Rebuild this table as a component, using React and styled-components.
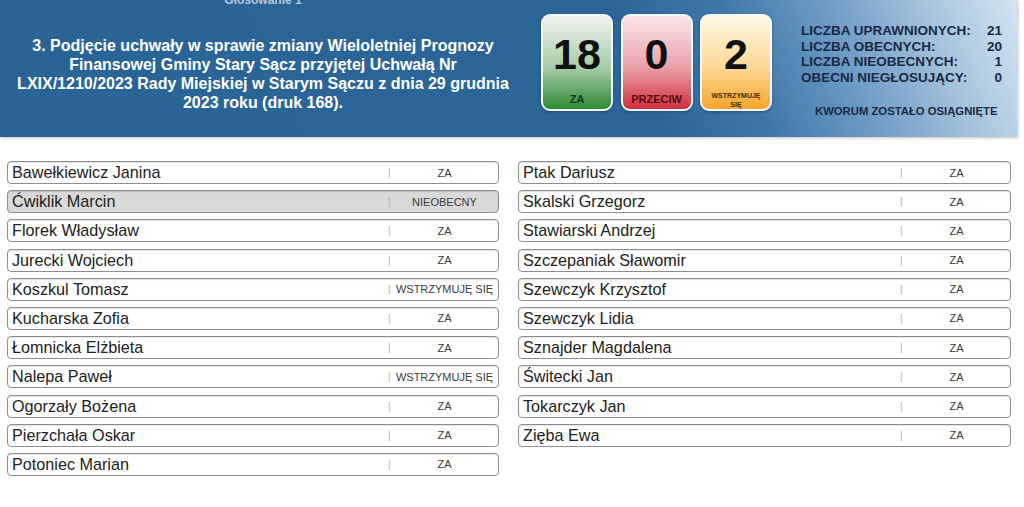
import React from "react";
import styled, { createGlobalStyle } from "styled-components";

const Global = createGlobalStyle`
  html, body { margin: 0; padding: 0; background: #ffffff; }
  body { font-family: "Liberation Sans", Arial, sans-serif; overflow: hidden; }
`;

const Page = styled.div`
  width: 1024px;
  height: 507px;
  background: #fff;
`;

const Header = styled.header`
  width: 1017px;
  height: 137px;
  display: flex;
  align-items: flex-start;
  background: linear-gradient(248deg, #d4e4f1 0%, #a9c6df 8%, #6f9cc5 18%, #3f77a9 28%, #2c6698 38%, #2a6496 100%);
  box-shadow: 1px 1px 3px rgba(0, 0, 0, 0.25);
`;

const TitleBlock = styled.div`
  width: 526px;
  flex: none;
  display: flex;
  flex-direction: column;
  align-items: center;
  text-align: center;
`;

const Caption = styled.div`
  margin-top: -7px;
  height: 14px;
  font-size: 12px;
  font-weight: bold;
  color: #b4c8dc;
  line-height: 14px;
`;

const Title = styled.div`
  margin-top: 29px;
  font-size: 16px;
  font-weight: bold;
  line-height: 19px;
  color: #ffffff;
  white-space: nowrap;
`;

const Cards = styled.div`
  display: flex;
  gap: 7.5px;
  margin-top: 14px;
  margin-left: 15px;
  flex: none;
`;

const palettes = {
  za: { top: "#eef4ee", mid: "#a8cca8", bottom: "#2f8a35", label: "#17331a" },
  przeciw: { top: "#fbe6e8", mid: "#eaa0a8", bottom: "#d12f3c", label: "#5a0a0a" },
  wstrzymuje: { top: "#fff7e6", mid: "#fdd894", bottom: "#f6a62c", label: "#4a2800" },
};

const Card = styled.div`
  width: 72px;
  height: 97px;
  box-sizing: border-box;
  border: 2px solid #f4f8fb;
  border-radius: 9px;
  background: linear-gradient(
    to bottom,
    ${(p) => palettes[p.$kind].top} 0%,
    ${(p) => palettes[p.$kind].mid} 55%,
    ${(p) => palettes[p.$kind].bottom} 100%
  );
  box-shadow: 0 1px 3px rgba(0, 0, 0, 0.3);
  display: flex;
  flex-direction: column;
  align-items: center;
`;

const Count = styled.div`
  margin-top: 16px;
  font-size: 43px;
  font-weight: bold;
  line-height: 44px;
  color: #111;
`;

const CardLabel = styled.div`
  margin-top: ${(p) => (p.$small ? "15px" : "17px")};
  font-size: ${(p) => (p.$small ? "7px" : "11px")};
  line-height: ${(p) => (p.$small ? "9px" : "12px")};
  font-weight: bold;
  text-align: center;
  color: ${(p) => palettes[p.$kind].label};
`;

const Stats = styled.div`
  margin-left: 29px;
  margin-top: 23px;
  width: 201px;
  flex: none;
  display: flex;
  flex-direction: column;
`;

const StatRow = styled.div`
  display: flex;
  justify-content: space-between;
  font-size: 13.5px;
  font-weight: bold;
  line-height: 15.7px;
  color: #1a2944;
  white-space: nowrap;
`;

const Quorum = styled.div`
  margin-top: 19px;
  margin-left: 14px;
  font-size: 11.3px;
  font-weight: bold;
  color: #1a2944;
  white-space: nowrap;
`;

const List = styled.main`
  display: grid;
  grid-template-columns: 492px 493px;
  column-gap: 19px;
  padding: 24px 0 0 7px;
  align-items: start;
`;

const Column = styled.div`
  display: flex;
  flex-direction: column;
  gap: 6.2px;
`;

const Row = styled.div`
  height: 23px;
  box-sizing: border-box;
  display: flex;
  align-items: center;
  border: 1.5px solid #8e8e8e;
  border-radius: 4px;
  background: ${(p) => (p.$absent ? "#d9d9d9" : "#ffffff")};
  box-shadow: inset 0 1px 1px rgba(0, 0, 0, 0.12);
`;

const Name = styled.div`
  flex: 1;
  padding-left: 4px;
  font-size: 16.2px;
  color: #222;
  white-space: nowrap;
`;

const Status = styled.div`
  width: 110px;
  flex: none;
  display: flex;
  align-items: center;
  font-size: 11px;
  color: #3a3a3a;
`;

const Sep = styled.span`
  color: #b0b0b0;
  font-size: 10px;
  width: 3px;
`;

const StatusText = styled.span`
  flex: 1;
  text-align: center;
  white-space: nowrap;
`;

const left = [
  ["Bawełkiewicz Janina", "ZA"],
  ["Ćwiklik Marcin", "NIEOBECNY"],
  ["Florek Władysław", "ZA"],
  ["Jurecki Wojciech", "ZA"],
  ["Koszkul Tomasz", "WSTRZYMUJĘ SIĘ"],
  ["Kucharska Zofia", "ZA"],
  ["Łomnicka Elżbieta", "ZA"],
  ["Nalepa Paweł", "WSTRZYMUJĘ SIĘ"],
  ["Ogorzały Bożena", "ZA"],
  ["Pierzchała Oskar", "ZA"],
  ["Potoniec Marian", "ZA"],
];

const right = [
  ["Ptak Dariusz", "ZA"],
  ["Skalski Grzegorz", "ZA"],
  ["Stawiarski Andrzej", "ZA"],
  ["Szczepaniak Sławomir", "ZA"],
  ["Szewczyk Krzysztof", "ZA"],
  ["Szewczyk Lidia", "ZA"],
  ["Sznajder Magdalena", "ZA"],
  ["Świtecki Jan", "ZA"],
  ["Tokarczyk Jan", "ZA"],
  ["Zięba Ewa", "ZA"],
];

const stats = [
  ["LICZBA UPRAWNIONYCH:", "21"],
  ["LICZBA OBECNYCH:", "20"],
  ["LICZBA NIEOBECNYCH:", "1"],
  ["OBECNI NIEGŁOSUJĄCY:", "0"],
];

function Member({ name, status }) {
  return (
    <Row $absent={status === "NIEOBECNY"}>
      <Name>{name}</Name>
      <Status>
        <Sep>|</Sep>
        <StatusText>{status}</StatusText>
      </Status>
    </Row>
  );
}

export default function App() {
  return (
    <Page>
      <Global />
      <Header>
        <TitleBlock>
          <Caption>Głosowanie 1</Caption>
          <Title>
            3. Podjęcie uchwały w sprawie zmiany Wieloletniej Prognozy
            <br />
            Finansowej Gminy Stary Sącz przyjętej Uchwałą Nr
            <br />
            LXIX/1210/2023 Rady Miejskiej w Starym Sączu z dnia 29 grudnia
            <br />
            2023 roku (druk 168).
          </Title>
        </TitleBlock>
        <Cards>
          <Card $kind="za">
            <Count>18</Count>
            <CardLabel $kind="za">ZA</CardLabel>
          </Card>
          <Card $kind="przeciw">
            <Count>0</Count>
            <CardLabel $kind="przeciw">PRZECIW</CardLabel>
          </Card>
          <Card $kind="wstrzymuje">
            <Count>2</Count>
            <CardLabel $kind="wstrzymuje" $small>
              WSTRZYMUJĘ
              <br />
              SIĘ
            </CardLabel>
          </Card>
        </Cards>
        <Stats>
          {stats.map(([label, value]) => (
            <StatRow key={label}>
              <span>{label}</span>
              <span>{value}</span>
            </StatRow>
          ))}
          <Quorum>KWORUM ZOSTAŁO OSIĄGNIĘTE</Quorum>
        </Stats>
      </Header>
      <List>
        <Column>
          {left.map(([n, s]) => (
            <Member key={n} name={n} status={s} />
          ))}
        </Column>
        <Column>
          {right.map(([n, s]) => (
            <Member key={n} name={n} status={s} />
          ))}
        </Column>
      </List>
    </Page>
  );
}
